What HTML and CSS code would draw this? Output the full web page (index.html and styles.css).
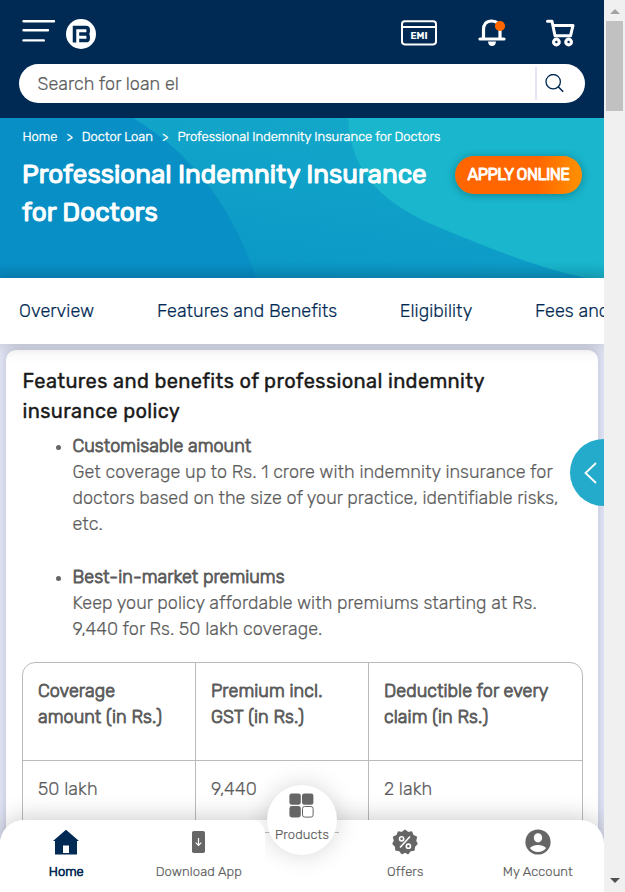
FILE: index.html
```
<!DOCTYPE html>
<html lang="en">
<head>
<meta charset="utf-8">
<title>Professional Indemnity Insurance for Doctors</title>
<link rel="stylesheet" href="styles.css">
</head>
<body>
<div class="page">
  <header class="top">
    <div class="bar">
      <svg class="burger" width="34" height="24" viewBox="0 0 34 24" fill="none" stroke="#fff" stroke-width="2.4" stroke-linecap="round"><path d="M1.5 2.3H32M1.5 11.3H26M1.5 21.4H21.8"/></svg>
      <svg class="logo" width="30" height="30" viewBox="0 0 30 30"><circle cx="15" cy="15" r="15" fill="#fff"/><path fill="none" stroke="#002953" stroke-width="3.5" d="M8.5 23.4V8.4H20Q22.2 8.4 22.2 10.6V12Q22.2 14.6 20.5 15Q22.2 15.6 22.2 18V19.4Q22.2 21.6 20 21.6H13.2M13.2 15H21"/></svg>
      <svg class="emi" width="36" height="26" viewBox="0 0 36 26"><rect x="1" y="1.2" width="34" height="23.2" rx="2.8" fill="none" stroke="#fff" stroke-width="2"/><path d="M1 7H35" stroke="#fff" stroke-width="2"/><text x="18" y="19" text-anchor="middle" class="emi-text">EMI</text></svg>
      <svg class="bell" width="28" height="28" viewBox="0 0 28 28"><path d="M5.5 19V11Q5.5 2 13.7 2T22 11V19M2 20H26" fill="none" stroke="#fff" stroke-width="3.2" stroke-linecap="round"/><path d="M10 22.5H18Q17.5 27 14 27T10 22.5Z" fill="#fff"/><circle cx="22" cy="7" r="5.1" fill="#ff6600"/></svg>
      <svg class="cart" width="30" height="28" viewBox="0 0 30 28" fill="none" stroke="#fff"><path d="M1.5 2.2H6L9 16.8H24.5L27 6.4H7.4" stroke-width="3" stroke-linecap="round" stroke-linejoin="round"/><circle cx="10.4" cy="23" r="2.8" stroke-width="3.2"/><circle cx="22.6" cy="23" r="2.8" stroke-width="3.2"/></svg>
    </div>
    <div class="search">
      <span class="query">Search for loan el</span>
      <svg class="lens" width="20" height="20" viewBox="0 0 20 20" fill="none" stroke="#002953" stroke-width="1.3"><circle cx="8.2" cy="8.2" r="7.2"/><path d="M13.2 13.2L18.2 18.2" stroke-width="1.6"/></svg>
    </div>
  </header>

  <section class="hero">
    <svg class="hero-art" width="604" height="160" viewBox="0 0 604 160">
      <defs><linearGradient id="mid" x1="0.8" y1="0" x2="0.4" y2="1"><stop offset="0" stop-color="#14a9ca"/><stop offset="1" stop-color="#0b98c6"/></linearGradient></defs>
      <path fill="url(#mid)" d="M133 0Q220 52 256 160H604V0Z"/>
      <path fill="#19b6cd" d="M348 0C350 58 388 88 438 109C488 130 545 152 587 160H604V0Z"/>
    </svg>
    <nav class="crumbs"><span>Home</span><i>&gt;</i><span>Doctor Loan</span><i>&gt;</i><span>Professional Indemnity Insurance for Doctors</span></nav>
    <div class="hero-row">
      <h1>Professional Indemnity Insurance<br>for Doctors</h1>
      <a class="apply">APPLY ONLINE</a>
    </div>
  </section>

  <nav class="tabs"><span>Overview</span><span>Features and Benefits</span><span>Eligibility</span><span>Fees and</span></nav>

  <main class="content">
    <article class="card">
      <h2>Features and benefits of professional indemnity insurance policy</h2>
      <ul>
        <li><strong>Customisable amount</strong><p>Get coverage up to Rs. 1 crore with indemnity insurance for doctors based on the size of your practice, identifiable risks, etc.</p></li>
        <li><strong>Best-in-market premiums</strong><p>Keep your policy affordable with premiums starting at Rs. 9,440 for Rs. 50 lakh coverage.</p></li>
      </ul>
      <div class="table">
        <div class="th">Coverage amount (in Rs.)</div>
        <div class="th">Premium incl. GST (in Rs.)</div>
        <div class="th">Deductible for every claim (in Rs.)</div>
        <div class="td">50 lakh</div>
        <div class="td">9,440</div>
        <div class="td">2 lakh</div>
      </div>
    </article>
  </main>

  <div class="drawer"><svg width="14" height="22" viewBox="0 0 14 22" fill="none" stroke="#fff" stroke-width="1.8"><path d="M12 1L1.5 11L12 21"/></svg></div>

  <nav class="dock">
    <div class="dock-left">
      <div class="item active"><svg width="26" height="26" viewBox="0 0 26 26"><path fill="#002953" d="M13 .8L26 12H24V25.5H2V12H0Z"/><path fill="#fff" d="M10 16.5H16V24H10Z"/></svg><span>Home</span></div>
      <div class="item"><svg width="26" height="26" viewBox="0 0 26 26"><rect x="6" y="2" width="13" height="22" rx="1.8" fill="#666"/><path d="M12.5 9V16.4M9.7 13.7L12.5 16.5L15.3 13.7" fill="none" stroke="#fff" stroke-width="1.2"/></svg><span>Download App</span></div>
    </div>
    <div class="dock-mid"><div class="disc">
      <svg width="25" height="25" viewBox="0 0 25 25" fill="#666"><rect x=".4" y=".4" width="11.4" height="11.4" rx="2.4"/><rect x="13" y=".4" width="11.4" height="11.4" rx="2.4"/><rect x=".4" y="13" width="11.4" height="11.4" rx="2.4"/><rect x="13.5" y="13.5" width="10.6" height="10.6" rx="2.2" fill="#fff" stroke="#666"/></svg>
      <span>Products</span></div></div>
    <div class="dock-right">
      <div class="item"><svg width="26" height="26" viewBox="0 0 26 26"><path fill="#666" stroke="#666" stroke-width="1.4" stroke-linejoin="round" d="M13 1.2L15.9 3.6L19.6 3L20.9 6.5L24.4 8.1L23.5 11.8L25 14.8L22.4 17.4L22 21L18.4 21.6L16 24.6L13 22.9L10 24.6L7.6 21.6L4 21L3.6 17.4L1 14.8L2.5 11.8L1.6 8.1L5.1 6.5L6.4 3L10.1 3.6Z"/><g fill="none" stroke="#fff" stroke-width="1.6"><path d="M18 7.5L8 18.5"/><circle cx="9.6" cy="9.8" r="2.1"/><circle cx="16.4" cy="17.2" r="2.1"/></g></svg><span>Offers</span></div>
      <div class="item"><svg width="26" height="26" viewBox="0 0 26 26"><circle cx="13" cy="13" r="12.6" fill="#666"/><ellipse cx="13" cy="8.8" rx="4.2" ry="4.6" fill="#fff"/><path d="M4.8 19Q8 16 13 16T21.2 19Q18 23 13 23T4.8 19Z" fill="#fff"/></svg><span>My Account</span></div>
    </div>
  </nav>
</div>
<div class="scrollbar"><b class="up"></b><b class="thumb"></b><b class="down"></b></div>
</body>
</html>
```
FILE: styles.css
```
* { box-sizing: border-box; }
body { margin: 0; display: flex; width: 625px; height: 892px; overflow: hidden; font-family: Rubik, Roboto, sans-serif; font-weight: 300; color: #5c5c5c; -webkit-text-stroke: .2px; }
svg { display: block; flex: none; }
h1, h2, p, ul { margin: 0; }
.page { position: relative; width: 604px; height: 892px; overflow: hidden; display: flex; flex-direction: column; }

.top { flex: none; height: 118px; background: #002953; }
.bar { height: 64px; display: flex; align-items: flex-start; padding: 19px 29px 0 22px; }
.logo { margin-left: 10px; }
.emi { margin: 1px 0 0 305px; }
.emi-text { font-size: 9.5px; font-weight: 700; fill: #fff; -webkit-text-stroke: 0; }
.bell { margin-left: 41px; }
.cart { margin-left: 40px; }
.search { height: 39px; width: 566px; margin-left: 19px; border-radius: 20px; background: #fff; display: flex; align-items: center; padding: 0 20px 0 18.5px; }
.query { font-size: 18px; flex: 1; letter-spacing: .04px; }
.lens { box-sizing: content-box; padding: 6.5px 0 6.5px 8px; border-left: 2px solid #e3e6f5; }

.hero { flex: none; position: relative; height: 160px; background: #0890c6; color: #fff; overflow: hidden; }
.hero-art { position: absolute; inset: 0; }
.hero::after { content: ""; position: absolute; inset: auto 0 0; height: 16px; background: linear-gradient(transparent, rgba(0, 40, 80, .13)); }
.crumbs { position: relative; display: flex; padding: 11px 0 0 22.5px; font-size: 13px; line-height: 16px; letter-spacing: -.02px; -webkit-text-stroke: .35px; }
.crumbs i { font-style: normal; width: 24.5px; text-align: center; }
.hero-row { position: relative; display: flex; justify-content: space-between; padding: 11px 22px 0 22px; }
h1 { font-size: 26px; line-height: 38px; font-weight: 400; white-space: nowrap; -webkit-text-stroke: 1px; }
.apply { flex: none; width: 127px; height: 38px; border-radius: 19px; background: linear-gradient(90deg, #ff6600 65%, #ff8c00 95%); box-shadow: 0 1px 9px rgba(0, 0, 0, .3); font-size: 16px; line-height: 38px; font-weight: 400; letter-spacing: -.55px; text-align: center; -webkit-text-stroke: .8px; }

.tabs { flex: none; position: relative; z-index: 2; height: 66px; background: #fff; display: flex; gap: 62.6px; align-items: center; padding-left: 19px; white-space: nowrap; font-size: 18px; letter-spacing: .07px; color: #002953; box-shadow: 0 2px 16px rgba(0, 0, 0, .18); }

.content { flex: none; height: 548px; padding: 6px 6px 0; background: #e0e4f3; }
.card { height: 600px; border-radius: 10px; background: #fff; padding: 16px 15px 0 16px; box-shadow: 0 0 9px rgba(40, 45, 90, .2); }
h2 { width: 500px; font-size: 20px; line-height: 30px; font-weight: 400; letter-spacing: .37px; color: #1a1a1a; -webkit-text-stroke: .4px; padding-left: .5px; }
ul { padding: 7px 20px 0 50.5px; font-size: 18px; line-height: 26px; letter-spacing: .045px; list-style: none; }
li { position: relative; margin-bottom: 27px; }
li:last-child { margin-bottom: 20px; }
li::before { content: ""; position: absolute; left: -16.5px; top: 12px; width: 5px; height: 5px; border-radius: 50%; background: #666; }
strong { font-weight: 300; display: block; -webkit-text-stroke: .9px; }

.table { display: grid; grid-template-columns: 173px 173px 1fr; grid-template-rows: 98px 72px; border: 1px solid #bbb; border-radius: 13px 13px 0 0; font-size: 18px; line-height: 26px; letter-spacing: .07px; }
.th, .td { padding: 15px 12px 0 15px; border-right: 1px solid #bbb; border-bottom: 1px solid #bbb; }
.table > :nth-child(3n) { border-right: 0; }
.th { -webkit-text-stroke: .9px; }

.drawer { position: absolute; z-index: 3; left: 570px; top: 439px; width: 67px; height: 67px; border-radius: 50%; background: #24aaca; padding: 23px 0 0 14px; }

.dock { position: absolute; z-index: 4; left: 0; bottom: 0; width: 604px; height: 72px; display: flex; background: #fff; border-radius: 24px 24px 0 0; box-shadow: 0 0 26px rgba(0, 0, 0, .24); font-size: 13px; line-height: 16px; letter-spacing: .1px; }
.dock-left, .dock-right { display: flex; height: 72px; }
.dock-left { position: relative; z-index: 1; width: 265px; background: #fff; border-radius: 24px 14px 0 0; }
.dock-right { width: 265px; }
.dock-mid { width: 74px; height: 13px; border-bottom: 1px solid #bbb; }
.item { flex: 1; display: flex; flex-direction: column; align-items: center; gap: 9px; padding-top: 9px; }
.active { color: #002953; letter-spacing: 0; -webkit-text-stroke: .7px; }
.disc { position: relative; width: 70px; height: 70px; margin: -35px 0 0 2px; border-radius: 50%; background: #fff; box-shadow: 0 0 24px rgba(0, 0, 0, .16); display: flex; flex-direction: column; align-items: center; gap: 9px; padding-top: 8px; }
.disc svg { margin-right: 1px; }

.scrollbar { width: 21px; height: 892px; background: #f0f0f0; display: flex; flex-direction: column; align-items: center; }
.up { margin-top: 9px; border: 5px solid transparent; border-top: 0; border-bottom: 5px solid #a3a3a3; }
.thumb { margin-top: 7px; width: 17px; height: 90px; background: #c1c1c1; }
.down { margin: auto 0 9px; border: 5px solid transparent; border-bottom: 0; border-top: 5px solid #505050; }
```
